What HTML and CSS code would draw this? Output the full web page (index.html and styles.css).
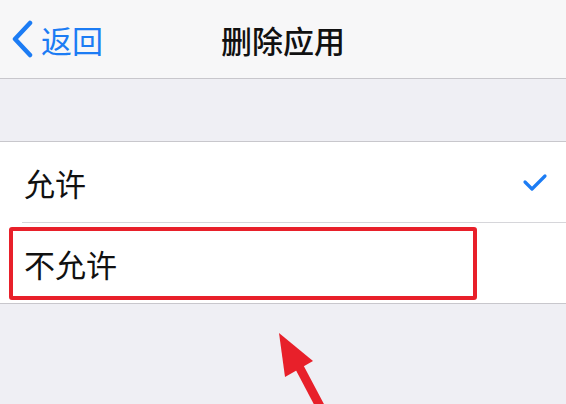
FILE: index.html
```html
<!DOCTYPE html>
<html lang="zh-CN">
<head>
  <meta charset="UTF-8"/>
  <meta name="viewport" content="width=device-width, initial-scale=1.0"/>
  <title>删除应用</title>
  <link rel="stylesheet" href="styles.css">
</head>
<body>

  <div class="navbar">
    <a class="back" href="#">
      <svg class="chevron" width="24" height="38" viewBox="0 0 24 38">
        <path d="M20 3 L5 19 L20 35" fill="none" stroke="#1c7cf4" stroke-width="4.5" stroke-linecap="round" stroke-linejoin="round"/>
      </svg>
      <span>返回</span>
    </a>
    <h1>删除应用</h1>
  </div>

  <div class="spacer"></div>

  <div class="list">
    <div class="row">
      <span>允许</span>
      <svg class="check" width="26" height="20" viewBox="0 0 26 20">
        <path d="M3 10 L10 17 L23 4" fill="none" stroke="#1c7cf4" stroke-width="3.2" stroke-linecap="round" stroke-linejoin="round"/>
      </svg>
    </div>
    <div class="row">
      <span>不允许</span>
    </div>
    <div class="highlight"></div>
  </div>

  <svg class="arrow" width="566" height="404" viewBox="0 0 566 404">
    <line x1="322" y1="410" x2="294" y2="357" stroke="#e8202a" stroke-width="9"/>
    <polygon points="279,333 285,377 313,361" fill="#e8202a"/>
  </svg>

</body>
</html>
```

FILE: styles.css
```css
* {
  box-sizing: border-box;
  margin: 0;
  padding: 0;
}

body {
  font-family: "Noto Sans CJK SC", "Noto Sans", sans-serif;
  background: #efeff4;
  color: #111;
  width: 566px;
  height: 404px;
  overflow: hidden;
  position: relative;
}

.navbar {
  height: 79px;
  background: #f7f7f8;
  border-bottom: 1px solid #c8c7cc;
  display: flex;
  align-items: center;
  justify-content: center;
  position: relative;
}

.navbar h1 {
  font-size: 31px;
  font-weight: 500;
  color: #111;
}

.back {
  position: absolute;
  left: 10px;
  top: 0;
  height: 78px;
  display: flex;
  align-items: center;
  gap: 7px;
  text-decoration: none;
  color: #1c7cf4;
  font-size: 31px;
}

.spacer {
  height: 63px;
  border-bottom: 1px solid #c8c7cc;
}

.list {
  background: white;
  border-bottom: 1px solid #c8c7cc;
  position: relative;
}

.row {
  height: 80px;
  margin-left: 22px;
  padding-right: 18px;
  display: flex;
  align-items: center;
  justify-content: space-between;
  font-size: 31px;
  color: #111;
}

.row + .row {
  border-top: 1px solid #d6d6da;
  height: 81px;
}

.row span {
  margin-left: 2px;
}

.highlight {
  position: absolute;
  left: 9px;
  top: 85px;
  width: 468px;
  height: 73px;
  border: 4px solid #e8202a;
  border-radius: 3px;
}

.arrow {
  position: absolute;
  left: 0;
  top: 0;
}
```
